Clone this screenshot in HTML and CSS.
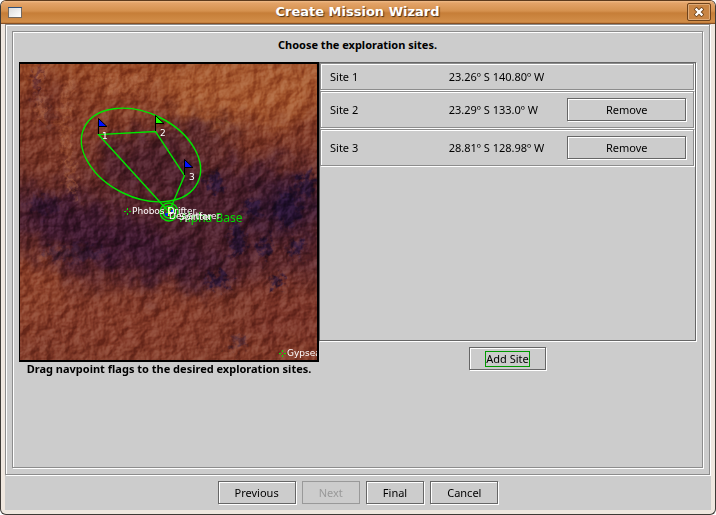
FILE: index.html
```html
<!DOCTYPE html>
<html lang="en">
<head>
<meta charset="utf-8">
<title>Create Mission Wizard</title>
<link rel="stylesheet" href="styles.css">
</head>
<body>
<div class="window">
  <header class="titlebar">
    <svg class="window-icon" width="14" height="11" viewBox="0 0 14 11" aria-hidden="true">
      <defs><linearGradient id="paper" x2="1" y2="1"><stop stop-color="#dcdcdc"/><stop offset="1" stop-color="#fff"/></linearGradient></defs>
      <rect width="14" height="11" fill="#756a60"/>
      <rect width="14" height="1" fill="#2f4f79"/>
      <rect x="1" y="1" width="12" height="9" fill="url(#paper)"/>
    </svg>
    <h1 class="title">Create Mission Wizard</h1>
    <button class="close" aria-label="Close">
      <svg width="10" height="10" viewBox="0 0 10 10" aria-hidden="true">
        <path d="M2.500 2.500L7.500 7.500M7.500 2.500L2.500 7.500" stroke="#6d421b" stroke-width="4" stroke-linecap="square"/>
        <path d="M2.500 2.500L7.500 7.500M7.500 2.500L2.500 7.500" stroke="#fff" stroke-width="2.400" stroke-linecap="square"/>
      </svg>
    </button>
  </header>
  <main class="content">
    <section class="outer etched">
      <div class="inner etched">
        <h2 class="heading">Choose the exploration sites.</h2>
        <div class="columns">
          <figure class="map-column">
            <svg class="map" viewBox="20 64 297 296" role="img" aria-label="Map of exploration sites">
              <defs>
                <linearGradient id="ground" x1="0" y1="0" x2="0" y2="1">
                  <stop offset="0" stop-color="#984a27"/>
                  <stop offset=".25" stop-color="#7d3827"/>
                  <stop offset=".45" stop-color="#642c2a"/>
                  <stop offset=".68" stop-color="#5e282a"/>
                  <stop offset=".8" stop-color="#7c3829"/>
                  <stop offset="1" stop-color="#823b29"/>
                </linearGradient>
                <filter id="soft" x="-20%" y="-20%" width="140%" height="140%" color-interpolation-filters="sRGB">
                  <feGaussianBlur stdDeviation="11" result="b"/>
                  <feTurbulence type="fractalNoise" baseFrequency=".05" numOctaves="4" seed="7"/>
                  <feDisplacementMap in="b" scale="35" xChannelSelector="R" yChannelSelector="G"/>
                </filter>
                <filter id="spot" x="-20%" y="-20%" width="140%" height="140%" color-interpolation-filters="sRGB">
                  <feGaussianBlur stdDeviation="2.500" result="b"/>
                  <feTurbulence type="fractalNoise" baseFrequency=".15" numOctaves="3" seed="4"/>
                  <feDisplacementMap in="b" scale="24" xChannelSelector="R" yChannelSelector="G"/>
                </filter>
                <filter id="relief" x="0" y="0" width="100%" height="100%" color-interpolation-filters="sRGB">
                  <feTurbulence type="fractalNoise" baseFrequency=".07" numOctaves="6" seed="23"/>
                  <feColorMatrix values="0 0 0 0 0  0 0 0 0 0  0 0 0 0 0  1 0 0 0 0"/>
                  <feDiffuseLighting surfaceScale="4" diffuseConstant="1" lighting-color="#fff"><feDistantLight azimuth="215" elevation="32"/></feDiffuseLighting>
                </filter>
                <g id="vehicle" stroke="#00e600" fill="none"><path d="M-3 .5h2M2 .5h2M.5-3v2M.5 2v2"/></g>
              </defs>
              <rect x="20" y="64" width="297" height="296" fill="url(#ground)"/>
              <g filter="url(#soft)">
                <ellipse cx="250" cy="85" rx="90" ry="38" fill="#a5582f"/>
                <ellipse cx="45" cy="125" rx="30" ry="50" fill="#7a3626"/>
                <ellipse cx="150" cy="165" rx="50" ry="38" fill="#4d2029"/>
                <ellipse cx="200" cy="135" rx="35" ry="20" fill="#5a2829"/>
                <ellipse cx="45" cy="212" rx="45" ry="20" fill="#431b2b"/>
                <ellipse cx="115" cy="240" rx="95" ry="30" fill="#3b172c" transform="rotate(18 115 240)"/>
                <ellipse cx="250" cy="205" rx="90" ry="45" fill="#4a1f2b"/>
                <ellipse cx="285" cy="205" rx="35" ry="24" fill="#32162d"/>
                <ellipse cx="195" cy="267" rx="50" ry="16" fill="#3d192b"/>
                <ellipse cx="25" cy="292" rx="45" ry="38" fill="#8c412a"/>
                <ellipse cx="130" cy="322" rx="90" ry="25" fill="#843b29"/>
                <ellipse cx="285" cy="315" rx="40" ry="25" fill="#7a3428"/>
              </g>
              <g filter="url(#spot)" fill="#1e102f" opacity=".8">
                <ellipse cx="215" cy="183" rx="8" ry="10"/><ellipse cx="252" cy="209" rx="8" ry="9"/>
                <ellipse cx="288" cy="210" rx="13" ry="18"/><ellipse cx="306" cy="185" rx="9" ry="12"/>
                <ellipse cx="238" cy="240" rx="8" ry="16"/><ellipse cx="265" cy="247" rx="7" ry="11"/>
                <ellipse cx="296" cy="249" rx="7" ry="10"/><ellipse cx="218" cy="280" rx="11" ry="8"/>
                <ellipse cx="278" cy="282" rx="7" ry="5"/><ellipse cx="238" cy="343" rx="8" ry="7" opacity=".6"/>
                <ellipse cx="75" cy="253" rx="30" ry="7" opacity=".6"/><ellipse cx="45" cy="205" rx="16" ry="9" opacity=".5"/>
                <ellipse cx="38" cy="85" rx="4" ry="19" fill="#45172a"/><ellipse cx="48" cy="115" rx="4" ry="18" fill="#622b25"/>
              </g>
              <g filter="url(#spot)" fill="none" stroke="#b5683f" stroke-width="5" opacity=".6">
                <path d="M48 64Q35 90 42 120M72 80Q61 105 66 145T73 195M95 76Q130 78 155 82M105 87Q120 90 140 88"/>
              </g>
              <rect class="relief" x="20" y="64" width="297" height="296" filter="url(#relief)"/>
              <g fill="none" stroke="#00e600" stroke-width="1.400">
                <ellipse cx="141" cy="155" rx="63" ry="42" transform="rotate(26 141 155)"/>
                <path d="M169 212L98.500 134.500L155.500 131.500L184.500 175.500Z"/>
                <circle cx="169" cy="212" r="9"/><circle cx="169" cy="212" r="6"/>
              </g>
              <g stroke="#000">
                <path d="M98.500 134V118.500L107 126.500H98.500" fill="#0010ff"/>
                <path d="M155.500 131V115.500L164 123.500H155.500" fill="#1aff00"/>
                <path d="M184.500 175V159.500L193 167.500H184.500" fill="#0010ff"/>
              </g>
              <path d="M165 213h3v3h-3zM171 210h3v3h-3z" fill="#0030e0"/>
              <path d="M168 207h2v9h-2z" fill="#e8e800"/>
              <use href="#vehicle" x="127" y="211"/><use href="#vehicle" x="169" y="212"/><use href="#vehicle" x="282" y="353"/>
              <text class="base-name" x="180" y="222">Alpha Base</text>
              <g class="map-label">
                <text x="102" y="139">1</text><text x="160" y="136">2</text><text x="189" y="180">3</text>
                <text x="132" y="214">Phobos Drifter</text>
                <text x="169" y="219">Desertfarer</text>
                <text x="179" y="220">Spiriter</text>
                <text x="287" y="356">Gypsea</text>
              </g>
            </svg>
            <figcaption class="caption">Drag navpoint flags to the desired exploration sites.</figcaption>
          </figure>
          <div class="site-column">
            <div class="site-list">
              <table class="sites">
                <tbody>
                  <tr class="site etched"><td>Site 1</td><td>23.26º S 140.80º W</td><td></td></tr>
                  <tr class="site etched"><td>Site 2</td><td>23.29º S 133.0º W</td><td><button class="button remove">Remove</button></td></tr>
                  <tr class="site etched"><td>Site 3</td><td>28.81º S 128.98º W</td><td><button class="button remove">Remove</button></td></tr>
                </tbody>
              </table>
            </div>
            <button class="button add"><span class="focus">Add Site</span></button>
          </div>
        </div>
      </div>
    </section>
    <footer class="actions">
      <button class="button">Previous</button>
      <button class="button" disabled>Next</button>
      <button class="button">Final</button>
      <button class="button">Cancel</button>
    </footer>
  </main>
</div>
</body>
</html>
```

FILE: styles.css
```css
* { box-sizing: border-box; }

body {
  margin: 0;
  background: #fff;
  color: #000;
  font: 11px/14px "Noto Sans", "Open Sans", sans-serif;
}

.window {
  display: flex;
  flex-direction: column;
  min-height: 100vh;
  border: 1px solid #3e3a36;
  border-top-color: #5c3a1c;
  border-radius: 6px;
  overflow: hidden;
  background: #efe7df;
}

.titlebar {
  display: flex;
  align-items: center;
  height: 23px;
  padding: 0 4px 0 7px;
  border-bottom: 1px solid #875125;
  background: linear-gradient(#f0bc8a 0, #e3a368 2px, #d5914e 10px, #c67e38 12px, #d28e49 21px, #b87333 22px);
}

.window-icon { display: block; }

.title {
  flex: 1;
  margin: 0;
  padding-left: 6px;
  color: #fff;
  font: bold 13px/20px "DejaVu Sans", sans-serif;
  text-align: center;
  text-shadow: 1px 1px 1px #4b3018;
}

.close {
  display: grid;
  place-items: center;
  width: 24px;
  height: 18px;
  padding: 0;
  border: 1px solid #6d421b;
  border-radius: 2px;
  background: #c98544;
  box-shadow: inset 0 0 0 1px #dfaa77;
}

.content {
  display: flex;
  flex: 1;
  flex-direction: column;
  margin: 0 4px 4px;
  background: #ccc;
}

.etched {
  border: 1px solid #8c8c8c;
  box-shadow: 1px 1px 0 #fff, inset 1px 1px 0 #fff;
}

.outer {
  display: flex;
  flex: 1;
  margin-right: 1px;
  padding: 6px 5px 6px 6px;
}

.inner {
  flex: 1;
  margin-right: 1px;
  padding: 6px;
}

.heading {
  margin: 0 0 10px;
  font-size: 11px;
  line-height: 14px;
  text-align: center;
}

.columns {
  display: grid;
  grid-template-columns: 300px minmax(0, 1fr);
}

.map-column { margin: 0; }

.map {
  display: block;
  width: 100%;
  border: 2px solid #000;
  border-left-width: 1px;
}

.relief {
  mix-blend-mode: soft-light;
  opacity: .5;
}

.map-label {
  fill: #fff;
  font-family: "DejaVu Sans", sans-serif;
  font-size: 9px;
}

.base-name {
  fill: #00dc00;
  font-size: 12px;
}

.caption {
  font-weight: bold;
  text-align: center;
  white-space: nowrap;
}

.site-column {
  display: flex;
  flex-direction: column;
  align-items: center;
  gap: 6px;
}

.site-list {
  width: 100%;
  min-height: 279px;
  border: 1px solid #666;
  box-shadow: 1px 1px 0 #fff;
}

.sites, .sites tbody { display: block; }

.sites { padding-right: 1px; }

.site {
  display: grid;
  grid-template-columns: repeat(3, minmax(0, 1fr));
  align-items: center;
  margin-bottom: 1px;
  padding: 6px 7px 6px 9px;
}

.site td {
  padding: 0;
  line-height: 13px;
  white-space: nowrap;
}

.button {
  height: 23px;
  padding: 0 16px;
  border: 1px solid #666;
  border-radius: 0;
  background: #ccc;
  box-shadow: 1px 1px 0 #fff, inset 1px 1px 0 #fff;
  color: #000;
  font: inherit;
}

.button:disabled {
  border-color: #999;
  box-shadow: none;
  color: #999;
}

.remove {
  display: block;
  width: 100%;
}

.add { padding: 0 15px; }

.focus {
  display: block;
  border: 1px solid #090;
}

.actions {
  display: flex;
  justify-content: center;
  gap: 6px;
  padding: 6px 0;
}
```
